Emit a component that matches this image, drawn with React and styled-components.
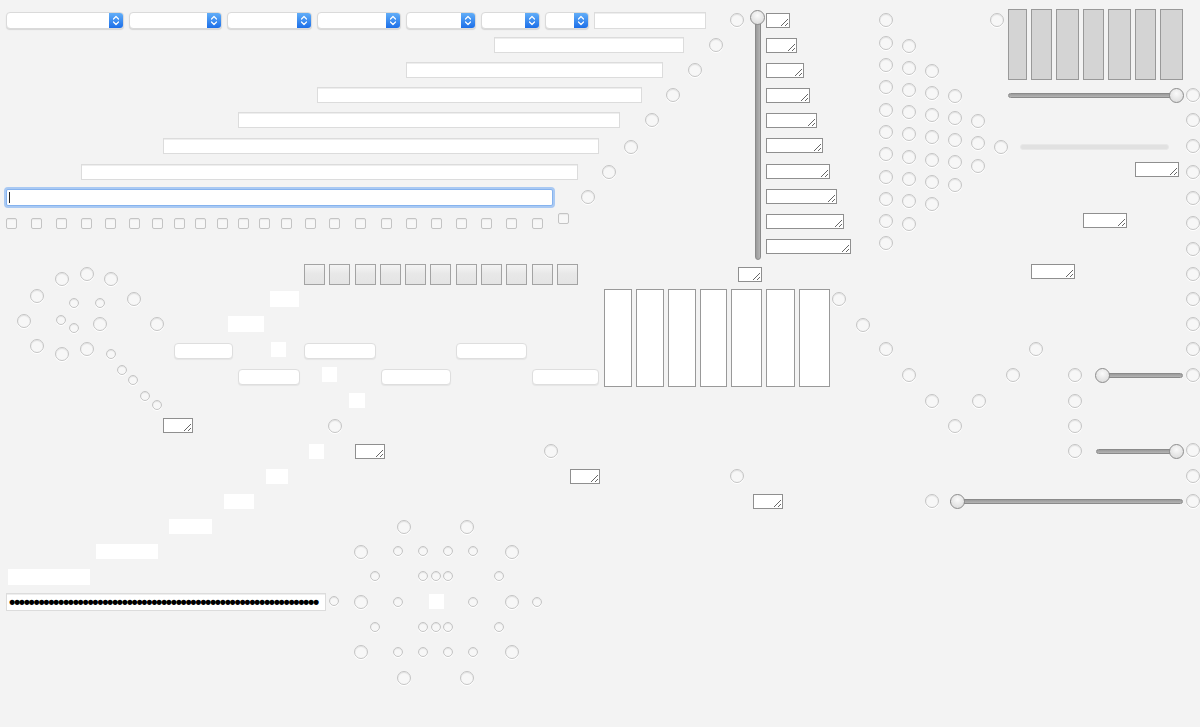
import React from 'react';
import styled, { createGlobalStyle, css } from 'styled-components';

const GlobalStyle = createGlobalStyle`
  html, body {
    margin: 0;
    padding: 0;
    background: #f3f3f3;
    font-family: "Liberation Sans", Arial, sans-serif;
  }
`;

// the controls are scattered over a free canvas, each at its own spot
const at = css`
  position: absolute;
  left: ${p => p.$x}px;
  top: ${p => p.$y}px;
  box-sizing: border-box;
`;

const Canvas = styled.div`
  position: relative;
  width: 1200px;
  height: 727px;
  overflow: hidden;
  background: #f3f3f3;
`;

const Toolbar = styled.div`
  ${at};
  display: flex;
  align-items: center;
  gap: 5px;
`;

const SelectBox = styled.div`
  width: ${p => p.$w}px;
  height: 17px;
  box-sizing: border-box;
  background: #fff;
  border: 1px solid #dadada;
  border-radius: 4px;
  box-shadow: 0 1px 1px rgba(0, 0, 0, 0.12);
  display: flex;
  justify-content: flex-end;
  overflow: hidden;
`;

const SelectArrows = styled.span`
  width: 14px;
  height: 100%;
  background: linear-gradient(#62aef8, #1c6fe9);
  display: flex;
  align-items: center;
  justify-content: center;
`;

const fieldLook = css`
  box-sizing: border-box;
  background: #fff;
  border: 1px solid #dcdcdc;
  box-shadow: inset 0 1px 0 #eeeeee;
  display: flex;
  align-items: center;
  padding: 0 2px;
  overflow: hidden;
`;

const ToolbarField = styled.div`
  ${fieldLook};
  width: ${p => p.$w}px;
  height: 17px;
`;

const Field = styled.div`
  ${at};
  ${fieldLook};
  width: ${p => p.$w}px;
  height: ${p => p.$h || 16}px;
  ${p => p.$focused && css`
    border-color: #86b3ee;
    border-radius: 2px;
    box-shadow: 0 0 0 2px #a9c9f3;
  `}
`;

const Caret = styled.span`
  width: 1px;
  height: 11px;
  background: #222;
`;

const Dots = styled.span`
  font-size: 18px;
  line-height: 14px;
  font-weight: bold;
  color: #000;
  white-space: nowrap;
  letter-spacing: -1.4px;
`;

const Radio = styled.span`
  ${at};
  width: ${p => p.$d}px;
  height: ${p => p.$d}px;
  border-radius: 50%;
  border: 1px solid #c4c4c4;
  background: #f7f7f7;
  box-shadow: inset 0 1px 1px rgba(0, 0, 0, 0.09), 0 1px 0 #ffffff;
`;

const Checkbox = styled.span`
  ${at};
  width: 11px;
  height: 11px;
  border: 1px solid #c4c4c4;
  border-radius: 2px;
  background: #f7f7f7;
  box-shadow: inset 0 1px 1px rgba(0, 0, 0, 0.06);
`;

const noteLook = css`
  width: ${p => p.$w}px;
  height: 15px;
  box-sizing: border-box;
  margin: 0;
  padding: 0;
  border: 1px solid #8f8f8f;
  background: #fff;
  resize: both;
  overflow: hidden;
  font-size: 8px;
`;

const Note = styled.textarea`
  ${at};
  ${noteLook};
`;

const NoteStack = styled.div`
  ${at};
  display: flex;
  flex-direction: column;
  align-items: flex-start;
  gap: 10.1px;
`;

const StackNote = styled.textarea`
  ${noteLook};
`;

const PillButton = styled.div`
  ${at};
  width: ${p => p.$w}px;
  height: 16px;
  background: #fff;
  border: 1px solid #dedede;
  border-radius: 4px;
  box-shadow: 0 1px 1px rgba(0, 0, 0, 0.06);
`;

const Block = styled.div`
  ${at};
  width: ${p => p.$w}px;
  height: ${p => p.$h}px;
  background: #fff;
`;

const ButtonRow = styled.div`
  ${at};
  display: flex;
  gap: 4.3px;
`;

const SquareButton = styled.span`
  width: 21px;
  height: 21px;
  box-sizing: border-box;
  border: 1px solid #a3a3a3;
  background: linear-gradient(#f4f4f4 0%, #e8e8e8 45%, #e4e4e4 100%);
`;

const BarRow = styled.div`
  ${at};
  display: flex;
  gap: 4px;
`;

const Bar = styled.span`
  width: ${p => p.$w}px;
  height: ${p => p.$h}px;
  box-sizing: border-box;
  border: 1px solid #999;
  background: ${p => (p.$gray ? '#d4d4d4' : '#fff')};
`;

const Track = styled.div`
  ${at};
  width: ${p => p.$w}px;
  height: ${p => p.$h}px;
  background: linear-gradient(${p => (p.$vertical ? 'to right' : 'to bottom')}, #9a9a9a, #b4b4b4);
  border: 1px solid #8a8a8a;
  border-radius: 3px;
`;

const Knob = styled.span`
  ${at};
  width: 15px;
  height: 15px;
  border-radius: 50%;
  border: 1px solid #8c8c8c;
  background: radial-gradient(circle at 50% 35%, #fafafa, #d6d6d6);
`;

const DisabledBar = styled.div`
  ${at};
  width: ${p => p.$w}px;
  height: 6px;
  border-radius: 3px;
  background: #e1e1e1;
  border: 1px solid #e8e8e8;
`;

const selects = [118, 93, 85, 84, 70, 59, 44];

const fields = [
  [494, 37, 190], [406, 62, 257], [317, 87, 325],
  [238, 112, 382], [163, 138, 436], [81, 164, 497],
];

const checkboxes = [6, 31, 56, 81, 105, 129, 152, 174, 195, 217, 238, 259, 281, 305, 329, 355, 381, 406, 431, 456, 481, 506, 532];

const big = [
  [737, 20], [716, 45], [695, 70], [673, 95], [652, 120], [631, 147], [609, 172], [588, 197],
  [997, 20], [1001, 147],
  [839, 299], [863, 325], [886, 349], [909, 375], [932, 401], [955, 426], [979, 401], [1013, 375], [1036, 349],
  [1075, 375], [1075, 401], [1075, 426], [1075, 451], [932, 501],
  [551, 451], [737, 476], [335, 426],
  [62, 279], [87, 274], [111, 279], [37, 296], [134, 299], [24, 321], [100, 324], [157, 324], [37, 346], [62, 354], [87, 349],
  [404, 527], [467, 527], [361, 552], [512, 552], [361, 602], [512, 602], [361, 652], [512, 652], [404, 678], [467, 678],
];

const columns = [
  [886, [20, 43, 65, 87, 110, 132, 154, 177, 199, 221, 243]],
  [909, [46, 68, 90, 112, 134, 157, 179, 201, 224]],
  [932, [71, 93, 115, 137, 160, 182, 204]],
  [955, [96, 118, 140, 162, 185]],
  [978, [121, 143, 166]],
  [1193, [95, 120, 146, 172, 198, 223, 249, 274, 299, 324, 349, 375, 450, 476, 501]],
];
columns.forEach(([x, ys]) => ys.forEach(y => big.push([x, y])));

const small = [
  [74, 303], [100, 303], [61, 320], [74, 328], [111, 354], [122, 370], [133, 380], [145, 396], [157, 405],
  [398, 551], [423, 551], [448, 551], [473, 551],
  [375, 576], [423, 576], [436, 576], [448, 576], [499, 576],
  [398, 602], [473, 602], [537, 602], [334, 601],
  [375, 627], [423, 627], [436, 627], [448, 627], [499, 627],
  [398, 652], [423, 652], [448, 652], [473, 652],
];

const noteColumn = [24, 31, 38, 44, 51, 57, 64, 71, 78, 85];
const notes = [
  [738, 267, 24], [1135, 162, 44], [1083, 213, 44], [1031, 264, 44],
  [163, 418, 30], [355, 444, 30], [570, 469, 30], [753, 494, 30],
];

const pills = [[174, 343, 59], [304, 343, 72], [456, 343, 71], [238, 369, 62], [381, 369, 70], [532, 369, 67]];

const blocks = [
  [270, 291, 29, 16], [228, 316, 36, 16], [271, 342, 15, 15], [322, 367, 15, 15], [349, 393, 16, 15],
  [309, 444, 15, 15], [266, 469, 22, 15], [224, 494, 30, 15], [169, 519, 43, 15], [96, 544, 62, 15], [8, 569, 82, 16],
  [429, 594, 15, 15],
];

const whiteBars = [28, 28, 28, 27, 31, 29, 31];
const grayBars = [19, 21, 23, 21, 23, 21, 23];

const sliders = [
  { x: 1008, y: 93, w: 175, knob: 1176 },
  { x: 1096, y: 373, w: 87, knob: 1102 },
  { x: 1096, y: 449, w: 87, knob: 1176 },
  { x: 950, y: 499, w: 233, knob: 957 },
];

const Arrows = () => (
  <svg width="8" height="11" viewBox="0 0 8 11" fill="none" stroke="#fff" strokeWidth="1.2" strokeLinecap="round" strokeLinejoin="round">
    <path d="M1.5 4 L4 1.5 L6.5 4" />
    <path d="M1.5 7 L4 9.5 L6.5 7" />
  </svg>
);

export default function App() {
  return (
    <Canvas>
      <GlobalStyle />

      <Toolbar $x={6} $y={12}>
        {selects.map((w, i) => (
          <SelectBox key={i} $w={w}>
            <SelectArrows><Arrows /></SelectArrows>
          </SelectBox>
        ))}
        <ToolbarField $w={112} />
      </Toolbar>

      {fields.map(([x, y, w, h]) => (
        <Field key={x} $x={x} $y={y} $w={w} $h={h} />
      ))}
      <Field $x={6} $y={189} $w={547} $h={17} $focused>
        <Caret />
      </Field>
      <Field $x={6} $y={593} $w={320} $h={18}>
        <Dots>{'•'.repeat(63)}</Dots>
      </Field>

      {checkboxes.map(x => (
        <Checkbox key={x} $x={x} $y={218} />
      ))}
      <Checkbox $x={558} $y={213} />

      <Track $x={755} $y={12} $w={6} $h={248} $vertical />
      <Knob $x={750} $y={10} />

      <NoteStack $x={766} $y={13}>
        {noteColumn.map((w, i) => (
          <StackNote key={i} $w={w} readOnly />
        ))}
      </NoteStack>
      {notes.map(([x, y, w]) => (
        <Note key={`${x}-${y}`} $x={x} $y={y} $w={w} readOnly />
      ))}

      <ButtonRow $x={304} $y={264}>
        {Array.from({ length: 11 }).map((_, i) => (
          <SquareButton key={i} />
        ))}
      </ButtonRow>

      <BarRow $x={604} $y={289}>
        {whiteBars.map((w, i) => (
          <Bar key={i} $w={w} $h={98} />
        ))}
      </BarRow>

      <BarRow $x={1008} $y={9}>
        {grayBars.map((w, i) => (
          <Bar key={i} $w={w} $h={71} $gray />
        ))}
      </BarRow>

      {sliders.map(s => (
        <React.Fragment key={s.y}>
          <Track $x={s.x} $y={s.y} $w={s.w} $h={5} />
          <Knob $x={s.knob - 7} $y={s.y - 5} />
        </React.Fragment>
      ))}
      <DisabledBar $x={1020} $y={144} $w={149} />

      {pills.map(([x, y, w]) => (
        <PillButton key={`${x}-${y}`} $x={x} $y={y} $w={w} />
      ))}

      {blocks.map(([x, y, w, h]) => (
        <Block key={`${x}-${y}`} $x={x} $y={y} $w={w} $h={h} />
      ))}

      {big.map(([x, y]) => (
        <Radio key={`b${x}-${y}`} $x={x - 7} $y={y - 7} $d={14} />
      ))}
      {small.map(([x, y]) => (
        <Radio key={`s${x}-${y}`} $x={x - 5} $y={y - 5} $d={10} />
      ))}
    </Canvas>
  );
}
